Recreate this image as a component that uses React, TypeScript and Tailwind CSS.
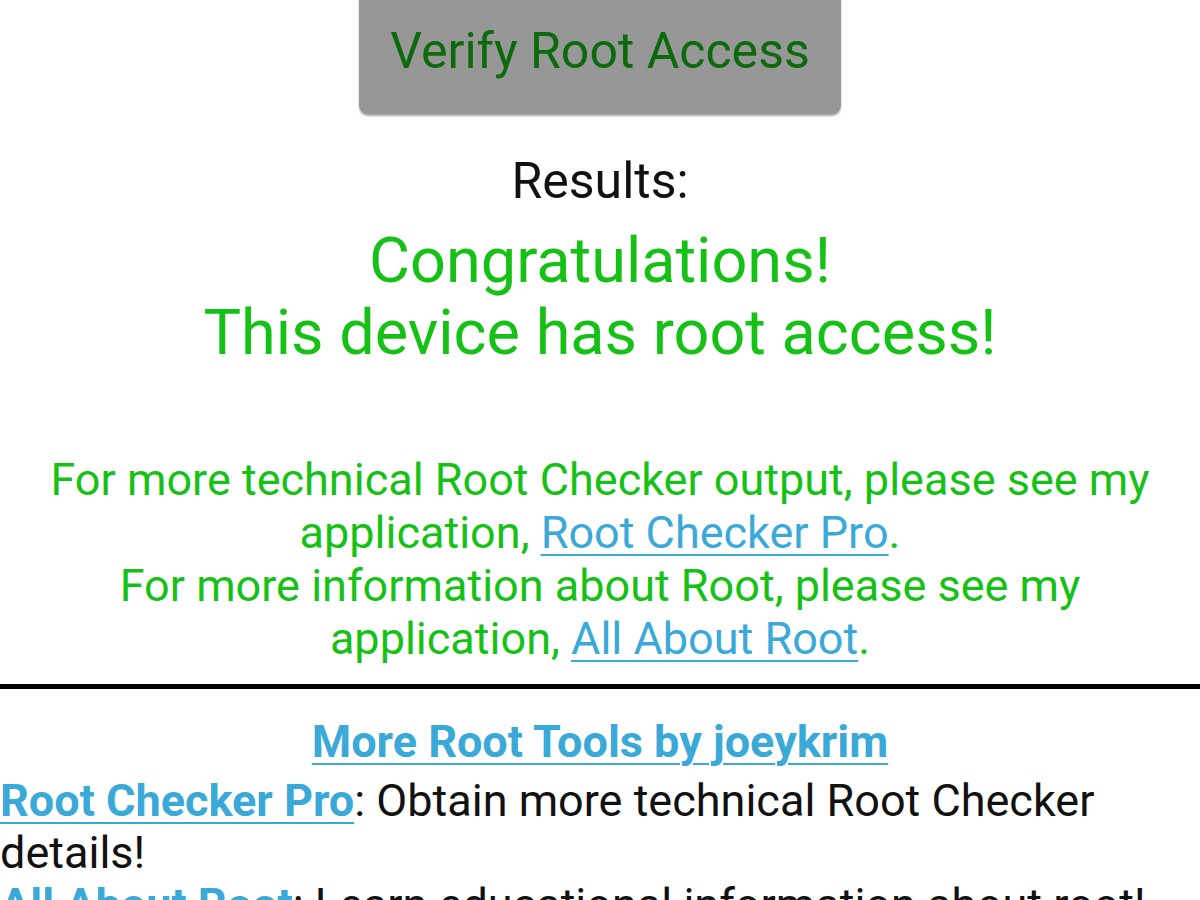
import React from "react";

const font = { fontFamily: "Roboto, 'Noto Sans', sans-serif" };

export default function App() {
  return (
    <div
      className="w-[1200px] h-[900px] overflow-hidden bg-white flex flex-col items-center"
      style={font}
    >
      <div className="shrink-0 -mt-[12px] h-[126px] w-[482px] rounded-[9px] bg-[#979797] shadow-[0_2px_2px_rgba(0,0,0,0.35)] flex justify-center pt-[38px]">
        <span className="text-[50px] leading-none text-[#0b6a0b]">Verify Root Access</span>
      </div>

      <div className="shrink-0 mt-[42px] text-[50px] leading-none text-[#111111]">Results:</div>

      <div className="shrink-0 mt-[19px] text-[63px] leading-[72px] text-[#16c116] text-center">
        Congratulations!
        <br />
        This device has root access!
      </div>

      <div className="shrink-0 mt-[84px] text-[45px] leading-[53px] text-[#16c116] text-center">
        For more technical Root Checker output, please see my
        <br />
        application,{" "}
        <span className="text-[#3aa9d8] underline decoration-2 underline-offset-[6px]">Root Checker Pro</span>.
        <br />
        For more information about Root, please see my
        <br />
        application,{" "}
        <span className="text-[#3aa9d8] underline decoration-2 underline-offset-[6px]">All About Root</span>.
      </div>

      <div className="shrink-0 mt-[19px] h-[5px] w-full bg-black" />

      <div className="shrink-0 mt-[26px] text-[45px] leading-[53px] font-bold text-[#3aa9d8] underline decoration-2 underline-offset-[6px]">
        More Root Tools by joeykrim
      </div>

      <div className="shrink-0 mt-[7px] w-full text-[45px] leading-[52px] text-[#111111] text-left">
        <span className="font-bold text-[#3aa9d8] underline decoration-2 underline-offset-[6px]">Root Checker Pro</span>
        : Obtain more technical Root Checker
        <br />
        details!
        <br />
        <span className="font-bold text-[#3aa9d8] underline decoration-2 underline-offset-[6px]">All About Root</span>
        : Learn educational information about root!
      </div>
    </div>
  );
}
